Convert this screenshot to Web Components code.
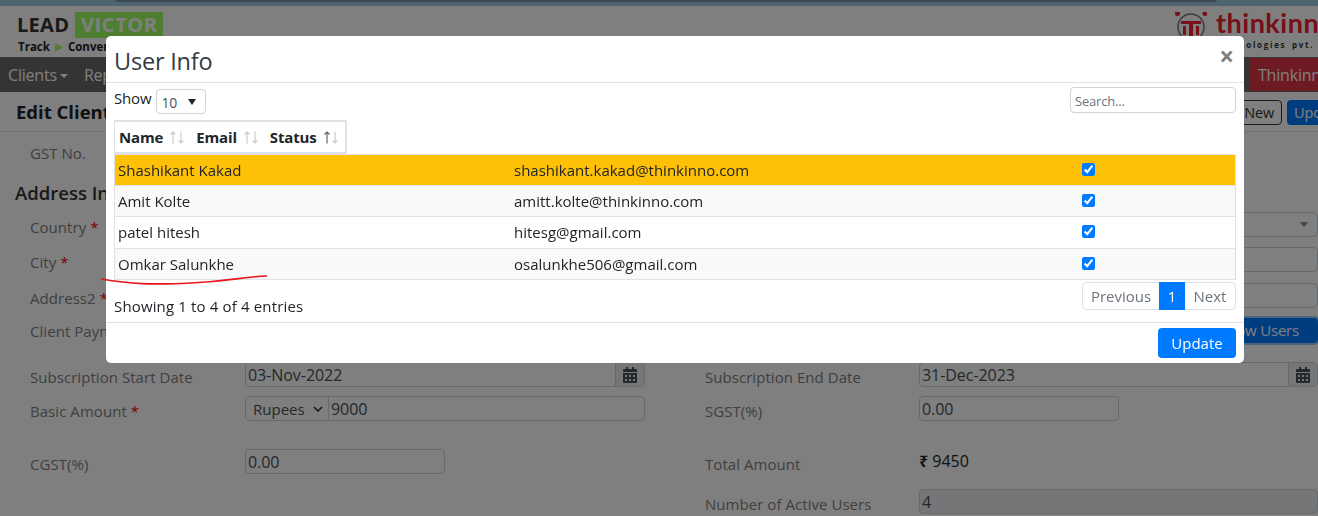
<!DOCTYPE html>
<html>
<head>
<meta charset="utf-8">
<title>Edit Client</title>
<style>
html,body{margin:0;padding:0;height:516px;overflow:hidden;background:#fff}
body{font:15px/1.5 "Open Sans","Noto Sans",sans-serif;color:#212529}
</style>
</head>
<body>
<lv-page></lv-page>
<lv-user-modal></lv-user-modal>
<script>
class LvField extends HTMLElement{
  constructor(){
    super();
    this.attachShadow({mode:'open'}).innerHTML=`<style>
:host{display:flex;box-sizing:border-box;height:25px}
.label{flex:none;width:var(--label,215px);padding-top:var(--label-top,5px);font-size:15px;line-height:20px;letter-spacing:.05px;color:#808080;white-space:nowrap}
.control{flex:1;min-width:0;display:flex;height:25px}
b{color:#e00;font-weight:400}
</style><div class="label"></div><div class="control"><slot></slot></div>`;
    this.shadowRoot.querySelector('.label').innerHTML=(this.getAttribute('label')||'')+(this.hasAttribute('req')?' <b>*</b>':'');
  }
}
customElements.define('lv-field',LvField);

class LvInput extends HTMLElement{
  constructor(){
    super();
    const addon=this.hasAttribute('cal')?`<span class="addon"><svg width="14" height="16" viewBox="0 0 14 16"><path fill="#495057" d="M3 0h2v2h4V0h2v2h2a1 1 0 0 1 1 1v2H0V3a1 1 0 0 1 1-1h2zM0 6h14v9a1 1 0 0 1-1 1H1a1 1 0 0 1-1-1zm2 2v2h2V8zm4 0v2h2V8zm4 0v2h2V8zm-8 4v2h2v-2zm4 0v2h2v-2zm4 0v2h2v-2z"/></svg></span>`:'';
    const arrow=this.hasAttribute('arrow')?`<svg class="arrow" width="8" height="5" viewBox="0 0 8 5"><path d="M0 0h8L4 5z" fill="#888"/></svg>`:'';
    this.attachShadow({mode:'open'}).innerHTML=`<style>
:host{display:flex;flex:1;min-width:0;box-sizing:border-box;height:25px;border:1px solid #ced4da;border-radius:4px;background:#fff;color:#495057;font-size:16px;letter-spacing:-.05px;line-height:25px;overflow:hidden}
:host([disabled]){background:#e9ecef}
:host([flat]){border-radius:0 4px 4px 0;margin-left:-1px}
.v{flex:1;padding-left:2px;white-space:nowrap}
.addon{flex:none;width:28px;display:flex;align-items:center;justify-content:center;background:#e9ecef;border-left:1px solid #ced4da}
.arrow{flex:none;align-self:center;margin-right:9px}
</style><span class="v"><slot></slot></span>${arrow}${addon}`;
  }
}
customElements.define('lv-input',LvInput);

class LvPage extends HTMLElement{
  constructor(){
    super();
    this.attachShadow({mode:'open'}).innerHTML=`<style>
:host{display:block;height:516px;overflow:hidden;background:#fff}
.strip{height:6px;background:#9cc8e0;padding:0 101px 0 115px;box-sizing:border-box}
.strip div{height:2px;background:#7a94a4;border-radius:0 0 3px 3px}
.brand{height:51px;display:flex;justify-content:space-between;padding:6px 0 0 17px;box-sizing:border-box;overflow:hidden}
.lead{font:700 20px/26px "Open Sans",sans-serif;color:#333;letter-spacing:.3px;display:flex;gap:6px}
.lead span{background:#9cff60;color:#fff;width:88px;box-sizing:border-box;text-align:center;letter-spacing:.6px}
.tag{font:700 11.5px/14px "Open Sans",sans-serif;color:#222;margin:2px 0 0 1px;display:flex;align-items:center;gap:5px}
.tag svg{flex:none}
.tk{display:flex;gap:9px;width:143px;overflow:hidden;white-space:nowrap}
.tk svg{flex:none;margin-top:-2px}
.tk .n{font:700 27px/30px Lato,sans-serif;color:#f0202f;margin-top:-4px;letter-spacing:.5px}
.tk .s{font:700 8px/8px "Open Sans",sans-serif;color:#333;letter-spacing:1.700px;word-spacing:2px;margin:3px 0 0 -1px}
nav{height:35px;box-sizing:border-box;padding:1px 0 0 8px;background:#686868;display:flex;align-items:center;color:#fff;font-size:16px;letter-spacing:-.2px;gap:16px}
nav .sp{flex:1}
nav .u{align-self:flex-start;margin-top:0;height:33px;width:69px;box-sizing:border-box;padding-left:9px;background:#dc3545;border-radius:4px 0 0 4px;line-height:35px;color:#fff;white-space:nowrap;overflow:hidden}
nav small{display:inline-block;border:4px solid transparent;border-top-color:#fff;border-bottom:0;vertical-align:3px;margin-left:3px}
.title{height:40px;box-sizing:border-box;border-bottom:1px solid #dee2e6;display:flex;align-items:center;padding:2px 0 0 16px;font:700 18.500px/1 "Open Sans",sans-serif;color:#222;gap:5px}
.title .sp{flex:1}
.btn{font:14.500px/23px "Open Sans",sans-serif;height:25px;box-sizing:border-box;padding:0 7px 0 6px;border:1px solid #333;border-radius:4px;color:#333;letter-spacing:-.15px}
.btn.p{width:31px;padding-left:7px;border:0;line-height:25px;background:#007bff;color:#fff;border-radius:4px 0 0 4px;overflow:hidden}
.form{padding:0 0 0 30px}
h3{margin:17px 0 0 -15px;height:26px;font:600 18.500px/26px "Open Sans",sans-serif;color:#333}
.row{display:grid;grid-template-columns:615px 1fr;column-gap:60px}
.row>*{min-width:0}
.row>lv-field:last-child{--label:214px}
.blue{background:#007bff;color:#fff;flex:1;border-radius:4px;height:25px;line-height:25px;text-align:right;padding-right:19px;box-shadow:0 0 0 2px rgba(0,123,255,.4);font-size:15px;letter-spacing:-.2px}
.sel{flex:none;width:84px;box-sizing:border-box;border:1px solid #ced4da;border-radius:4px 0 0 4px;padding-left:7px;color:#495057;line-height:22px;display:flex;align-items:center;gap:8px}
.sel svg{flex:none}
.amt{font-size:16px;color:#212529;line-height:20px;padding-top:2px}
.amt b{font-weight:700}
</style>
<div class="strip"><div></div></div>
<div class="brand">
  <div>
    <div class="lead">LEAD <span>VICTOR</span></div>
    <div class="tag">Track <svg width="8" height="9" viewBox="0 0 8 9"><path d="M0 0l8 4.500L0 9z" fill="#9cff60"/></svg> Convert</div>
  </div>
  <div class="tk">
    <svg width="32" height="32" viewBox="0 0 32 32"><circle cx="16" cy="17" r="13" fill="none" stroke="#777" stroke-width="1.500"/><circle cx="2.500" cy="3.500" r="2.500" fill="#f0202f"/><circle cx="30" cy="3.500" r="2.500" fill="#f0202f"/><path fill="#f0202f" d="M6 11h20v3h-8v16h-4V14H6z"/><path fill="#f0202f" d="M8 16h3v9H8zM21 16h3v9h-3z"/></svg>
    <div><div class="n">thinkinno</div><div class="s">technologies pvt. ltd</div></div>
  </div>
</div>
<nav><span>Clients<small></small></span><span>Reports</span><span class="sp"></span><span class="u">Thinkinno</span></nav>
<div class="title"><span>Edit Client</span><span class="sp"></span><span class="btn">New</span><span class="btn p">Update</span></div>
<div class="form">
  <div class="row" style="margin-top:6px"><lv-field label="GST No."></lv-field><lv-field></lv-field></div>
  <h3>Address Info</h3>
  <div class="row" style="margin-top:6px"><lv-field label="Country" req></lv-field><lv-field><lv-input arrow></lv-input></lv-field></div>
  <div class="row" style="margin-top:10px"><lv-field label="City" req></lv-field><lv-field><lv-input></lv-input></lv-field></div>
  <div class="row" style="margin-top:11px"><lv-field label="Address2" req></lv-field><lv-field><lv-input></lv-input></lv-field></div>
  <div class="row" style="margin-top:10px;--label-top:3px"><lv-field label="Client Payment"></lv-field><lv-field><div class="blue">Show Users</div></lv-field></div>
  <div class="row" style="margin-top:19px"><lv-field label="Subscription Start Date"><lv-input cal>03-Nov-2022</lv-input></lv-field><lv-field label="Subscription End Date"><lv-input cal>31-Dec-2023</lv-input></lv-field></div>
  <div class="row" style="margin-top:9px"><lv-field label="Basic Amount" req><div class="sel">Rupees<svg width="10" height="6" viewBox="0 0 10 6"><path d="M1 1l4 4 4-4" fill="none" stroke="#333" stroke-width="1.600"/></svg></div><lv-input flat>9000</lv-input></lv-field><lv-field label="SGST(%)"><div style="width:200px;display:flex"><lv-input>0.00</lv-input></div></lv-field></div>
  <div class="row" style="margin-top:28px"><lv-field label="CGST(%)"><div style="width:200px;display:flex"><lv-input>0.00</lv-input></div></lv-field><lv-field label="Total Amount"><div class="amt"><b>₹</b> 9450</div></lv-field></div>
  <div class="row" style="margin-top:15px"><lv-field></lv-field><lv-field label="Number of Active Users"><lv-input disabled>4</lv-input></lv-field></div>
</div>`;
  }
}
class LvUserModal extends HTMLElement{
  constructor(){
    super();
    const users=[['Shashikant Kakad','shashikant.kakad@thinkinno.com'],['Amit Kolte','amitt.kolte@thinkinno.com'],['patel hitesh','hitesg@gmail.com'],['Omkar Salunkhe','osalunkhe506@gmail.com']];
    const rows=users.map(u=>`<tr><td>${u[0]}</td><td>${u[1]}</td><td><input type="checkbox" checked></td></tr>`).join('');
    const arrows=on=>`<svg width="16" height="13" viewBox="0 0 16 13"><path d="M4 12.500V1M1.500 3.500L4 1l2.500 2.500" fill="none" stroke="${on?'#666':'#c8ccd0'}" stroke-width="1.200"/><path d="M12 .500V12M9.500 9.500L12 12l2.500-2.500" fill="none" stroke="#c8ccd0" stroke-width="1.200"/></svg>`;
    this.attachShadow({mode:'open'}).innerHTML=`<style>
:host{position:fixed;inset:0;display:block;background:rgba(0,0,0,.5);font:15px/1.5 "Open Sans","Noto Sans",sans-serif;color:#212529}
.dlg{position:absolute;left:106px;top:36px;width:1138px;height:327px;box-sizing:border-box;background:#fff;border-radius:5px;display:flex;flex-direction:column}
header{height:47px;box-sizing:border-box;border-bottom:1px solid #dee2e6;display:flex;align-items:center;justify-content:space-between;padding:5px 8px 0}
h1{margin:0;font:400 23.500px/1.2 "Open Sans",sans-serif;letter-spacing:-.2px;color:#343a40}
.x{font:700 26px/1 "Open Sans",sans-serif;color:#7f7f7f;margin-right:2px;margin-top:-12px}
main{flex:1;padding:5px 8px 0;display:flex;flex-direction:column}
.top{display:flex;justify-content:space-between;height:32px}
.show{display:flex;gap:5px;align-items:flex-start;height:26px;line-height:21px;letter-spacing:-.15px}
.pick{width:50px;height:25px;margin-top:1px;box-sizing:border-box;border:1px solid #ced4da;border-radius:4px;padding-left:4px;line-height:26px;font-size:14px;display:flex;gap:11px;color:#495057}
.pick svg{margin-top:9px}
input.q{width:166px;height:26px;margin-top:-1px;box-sizing:border-box;border:1px solid #ced4da;border-radius:4px;padding:1px 4px 0;font:13px "Open Sans",sans-serif;letter-spacing:-.2px;outline:0}
input.q::placeholder{color:#6c757d;opacity:1}
.head{align-self:flex-start;display:flex;box-sizing:border-box;width:233px;height:34px;border:2px solid #dee2e6;border-left-width:1px;align-items:center;padding-left:4px;font-weight:700;font-size:15px;letter-spacing:-.15px;color:#212529}
.head span{display:flex;align-items:center;gap:6px;margin-right:11px}
table{width:1122px;border-collapse:collapse;border:1px solid #dee2e6;table-layout:fixed}
td{height:30px;padding:0 3px;border-top:1px solid #dee2e6;white-space:nowrap}
tr:first-child td{background:#ffc107;border-top:0}
tr:nth-child(3) td{height:31px}
tr:nth-child(even) td{background:#f9f9f9}
td:nth-child(1){width:390px}
td:nth-child(2){width:562px}
input[type=checkbox]{margin:-2px 0 0;width:13px;height:13px;accent-color:#007bff;display:block}
.foot{display:flex;justify-content:space-between;margin-top:2px}
.info{padding-top:13px;line-height:22px;letter-spacing:.15px}
.pg{display:flex;height:28px;box-sizing:border-box;border:1px solid #dee2e6;border-radius:4px;color:#6c757d;line-height:26px}
.pg span{width:76px;text-align:center}
.pg .on{width:26px;background:#007bff;color:#fff;margin:-1px 0;padding:1px 0;line-height:26px}
.pg span:last-child{width:50px}
footer{height:41px;box-sizing:border-box;border-top:1px solid #dee2e6;display:flex;justify-content:flex-end;align-items:flex-start;padding:5px 8px 0}
button{height:30px;width:78px;border:0;border-radius:4px;background:#007bff;color:#fff;font:15px/30px "Open Sans",sans-serif;padding:0}
svg.mark{position:absolute;left:0;top:0;pointer-events:none}
</style>
<div class="dlg">
  <header><h1>User Info</h1><span class="x">×</span></header>
  <main>
    <div class="top">
      <div class="show">Show <div class="pick">10<svg width="8" height="6" viewBox="0 0 8 6"><path d="M0 0h8L4 6z" fill="#222"/></svg></div></div>
      <input class="q" placeholder="Search...">
    </div>
    <div class="head"><span>Name ${arrows()}</span><span>Email ${arrows()}</span><span>Status ${arrows(1)}</span></div>
    <table>${rows}</table>
    <div class="foot"><div class="info">Showing 1 to 4 of 4 entries</div><div class="pg"><span>Previous</span><span class="on">1</span><span>Next</span></div></div>
  </main>
  <footer><button>Update</button></footer>
</div>
<svg class="mark" width="1318" height="516"><path d="M101 279c30 5 50 6 90 4s50-6 76-7" fill="none" stroke="#e8141c" stroke-width="1.700"/></svg>`;
  }
}
customElements.define('lv-page',LvPage);
customElements.define('lv-user-modal',LvUserModal);
</script>
</body>
</html>
